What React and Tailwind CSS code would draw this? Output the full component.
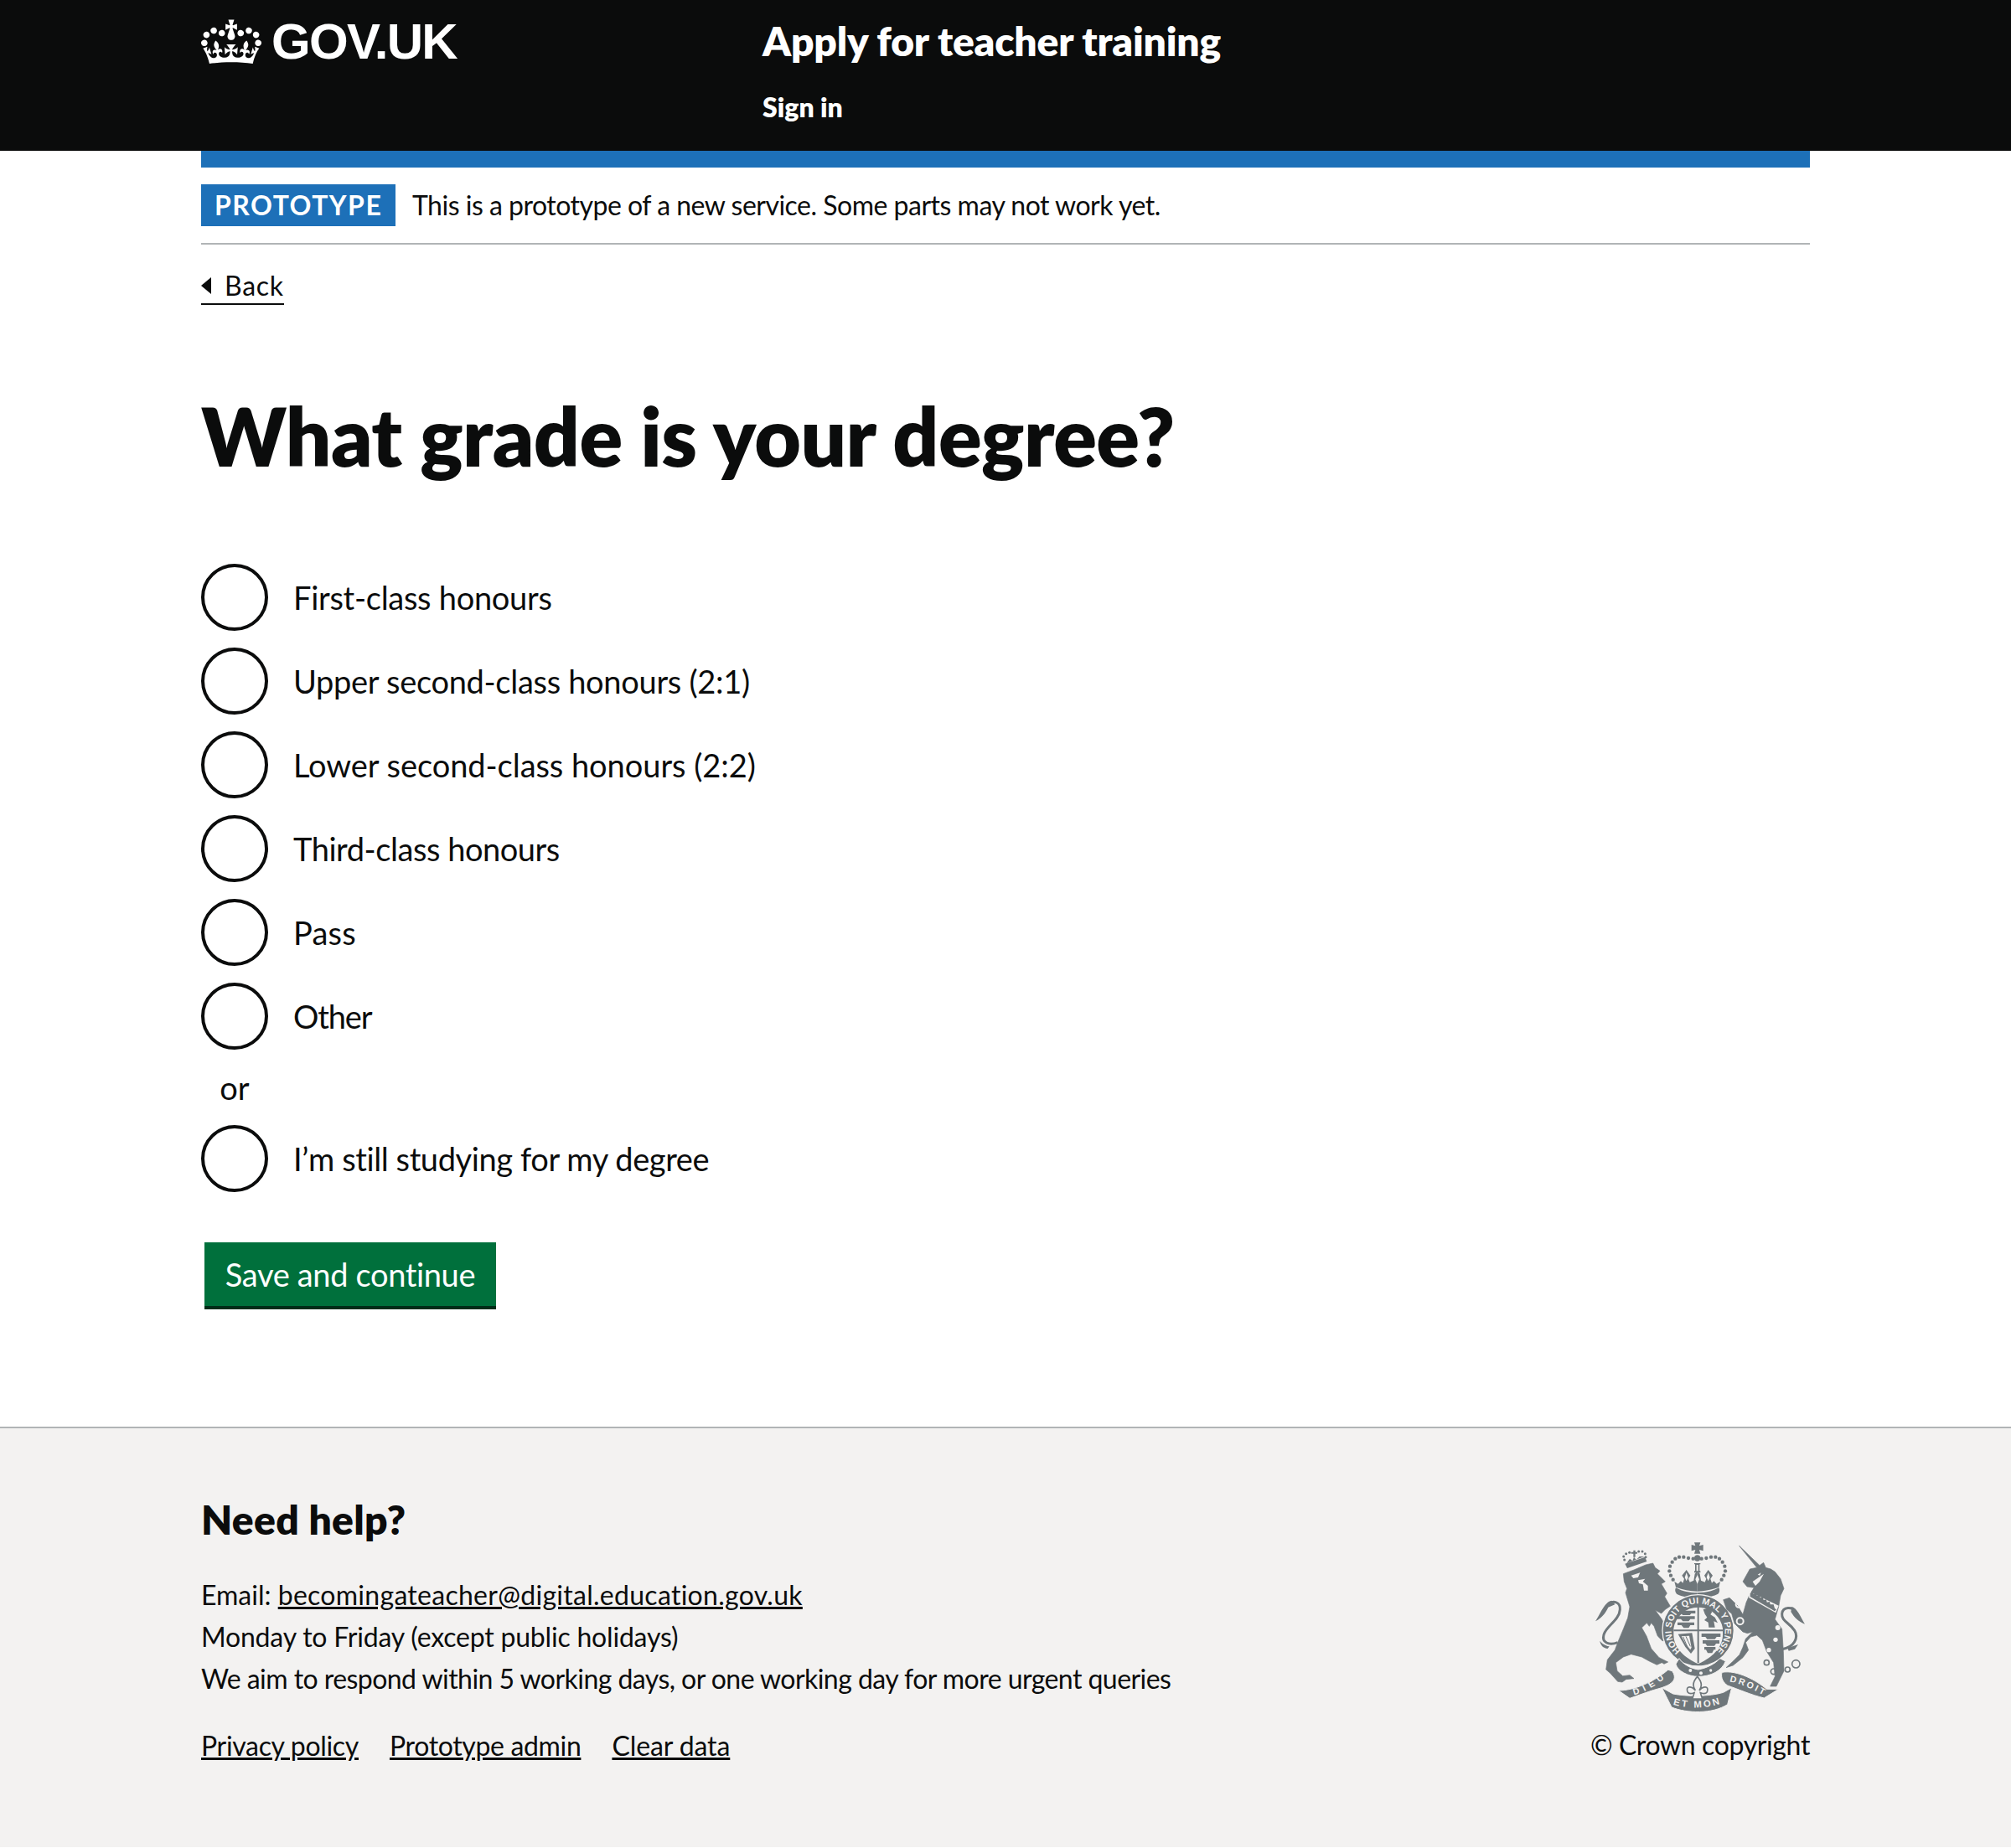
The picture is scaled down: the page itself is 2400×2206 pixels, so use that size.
import React from "react";

const font = { fontFamily: 'Lato, sans-serif' };
const G = "#6f777b";
const B = "#f3f2f1";
const crestFont = "Liberation Sans, sans-serif";

function Crown() {
  return (
    <svg viewBox="0 0 132 97" className="w-[72px] h-[60px] text-white shrink-0" aria-hidden="true">
      <path fill="currentColor" fillRule="evenodd" d="M25 30.2c3.5 1.5 7.7-.2 9.1-3.7 1.5-3.6-.2-7.8-3.9-9.2-3.6-1.4-7.6.3-9.1 3.9-1.4 3.5.3 7.5 3.9 9zM9 39.5c3.6 1.5 7.8-.2 9.2-3.7 1.5-3.6-.2-7.8-3.9-9.1-3.6-1.5-7.6.2-9.1 3.8-1.4 3.5.3 7.5 3.8 9zM4.4 57.2c3.5 1.5 7.7-.2 9.1-3.8 1.5-3.6-.2-7.7-3.9-9.1-3.5-1.5-7.6.3-9.1 3.8-1.4 3.5.3 7.6 3.9 9.1zm38.3-21.4c3.5 1.5 7.7-.2 9.1-3.8 1.5-3.6-.2-7.7-3.9-9.1-3.6-1.5-7.6.3-9.1 3.8-1.3 3.6.4 7.7 3.9 9.1zm64.4-5.6c-3.6 1.5-7.8-.2-9.1-3.7-1.5-3.6.2-7.8 3.8-9.2 3.6-1.4 7.7.3 9.2 3.9 1.3 3.5-.4 7.5-3.9 9zm15.9 9.3c-3.6 1.5-7.7-.2-9.1-3.7-1.5-3.6.2-7.8 3.7-9.1 3.6-1.5 7.7.2 9.2 3.8 1.5 3.5-.3 7.5-3.8 9zm4.7 17.7c-3.6 1.5-7.8-.2-9.2-3.8-1.5-3.6.2-7.7 3.9-9.1 3.6-1.5 7.7.3 9.2 3.8 1.3 3.5-.4 7.6-3.9 9.1zM89.3 35.8c-3.6 1.5-7.8-.2-9.2-3.8-1.4-3.6.2-7.7 3.9-9.1 3.6-1.5 7.7.3 9.2 3.8 1.4 3.6-.3 7.7-3.9 9.1zM69.7 17.7l8.9 4.7V9.3l-8.9 2.8c-.2-.3-.5-.6-.9-.9L72.4 0H59.6l3.5 11.2c-.3.3-.6.5-.9.9l-8.8-2.8v13.1l8.8-4.7c.3.3.6.7.9.9l-5 15.4v.1c-.2.8-.4 1.6-.4 2.4 0 4.1 3.1 7.5 7 8.1h.2c.3 0 .7.1 1 .1.4 0 .7 0 1-.1h.2c4-.6 7.1-4.1 7.1-8.1 0-.8-.1-1.7-.4-2.4V34l-5.1-15.4c.4-.2.7-.6 1-.9zM66 92.8c16.9 0 32.8 1.1 47.1 3.2 4-16.9 8.9-26.7 14-33.5l-9.6-3.4c1 4.9 1.1 7.2 0 10.2-1.5-1.4-3-4.3-4.2-8.7L108.6 76c2.8-2 5-3.2 7.5-3.3-4.4 9.4-10 11.9-13.6 11.2-4.3-.8-6.3-4.6-5.6-7.9 1-4.7 5.7-5.9 8-.5 4.3-8.7-3-11.4-7.6-8.8 7.1-7.2 7.9-13.5 2.1-21.1-8 6.1-8.1 12.3-4.5 20.8-4.7-5.4-12.1-2.5-9.5 6.2 3.4-5.2 7.9-2 7.2 3.1-.6 4.3-6.4 7.8-13.5 7.2-10.3-.9-10.9-8-11.2-13.8 2.5-.5 7.1 1.8 11 7.3L80.2 60c-4.1 4.4-8 5.3-12.3 5.4 1.4-4.4 8-11.6 8-11.6H55.5s6.4 7.2 7.9 11.6c-4.2-.1-8-1-12.3-5.4l1.4 16.4c3.9-5.5 8.5-7.7 10.9-7.3-.3 5.8-.9 12.8-11.1 13.8-7.2.6-12.9-2.9-13.5-7.2-.7-5 3.8-8.3 7.1-3.1 2.7-8.7-4.6-11.6-9.4-6.2 3.7-8.5 3.6-14.7-4.6-20.8-5.8 7.6-5 13.9 2.2 21.1-4.7-2.6-11.9.1-7.7 8.8 2.3-5.5 7.1-4.2 8.1.5.7 3.3-1.3 7.1-5.7 7.9-3.5.7-9-1.8-13.5-11.2 2.5.1 4.7 1.3 7.5 3.3l-4.7-15.4c-1.2 4.4-2.7 7.2-4.3 8.7-1.1-3-.9-5.3 0-10.2l-9.5 3.4c5 6.9 9.9 16.7 14 33.5 14.8-2.1 30.8-3.2 47.7-3.2z" />
    </svg>
  );
}

const crownHalf = (
  <g>
    {[[362,68],[345,66],[328,62],[312,62],[298,68],[287,80],[279,95],[277,112],[282,128],[290,143]].map(([x, y]) => (
      <circle key={x + "-" + y} cx={x} cy={y} r="6.5" fill={G} />
    ))}
    <path fill={G} d="M295,150 L308,158 L318,148 L325,155 L330,140 L322,128 L338,108 L352,128 L345,140 L350,152 L364,146 L368,122 L377,112 V185 C350,185 325,178 300,170 Z" />
    <path fill={G} d="M300,172 C325,186 350,190 377,190 V208 C350,208 322,204 303,194 C297,188 296,178 300,172 Z" />
  </g>
);

function Crest() {
  return (
    <svg viewBox="0 0 765 630" className="w-[255px] h-[210px] mt-[53px] mr-[5px]" aria-hidden="true">
      <defs>
        <path id="garter" d="M318,398 A96 96 0 1 1 442,398" />
        <path id="dieu" d="M150,556 C185,548 225,525 258,498" />
        <path id="etmon" d="M290,590 C335,605 410,606 462,586" />
        <path id="droit" d="M492,508 C530,515 575,535 612,556" />
      </defs>

      {/* lion */}
      <path fill={G} stroke={G} strokeWidth="2" strokeLinejoin="round" d="M112,122 L150,108 L192,90 L218,84 L226,100 L243,112 L234,122 L262,150 L248,158 L268,192 L260,204 L280,238 L262,250 L248,264 L226,252 L250,285 L264,315 L256,345 L270,362 L252,362 L235,345 L222,310 L212,298 L205,310 L196,298 L178,315 L195,345 L212,390 L240,422 L272,438 L258,445 L250,440 L232,448 L205,435 L178,420 L140,410 L112,420 L85,440 L90,470 L110,488 L135,485 L150,497 L122,500 L108,510 L92,508 L65,478 L50,465 L55,430 L82,395 L92,368 L112,320 L128,280 L135,240 L120,190 L125,175 L115,150 Z" />
      <path fill={B} d="M140,128 L172,118 L165,135 L148,138 Z M165,145 L190,140 L182,150 L200,165 L200,182 L186,182 L182,160 L168,156 Z" />
      <path fill="none" stroke={G} strokeWidth="9" d="M92,368 C60,380 34,368 42,340 C50,310 98,288 100,250 C102,225 78,215 58,230" />
      <path fill={G} d="M70,218 C45,222 30,265 12,292 C38,278 48,262 58,242 L82,232 Z M28,362 C36,372 44,378 62,382 L56,390 C40,388 30,378 28,362 Z" />
      <path fill={G} d="M118,86 L190,62 L196,78 L126,102 Z M124,84 L135,68 L145,76 L150,62 L158,72 L170,60 L188,60 Z M140,44 H148 V38 H155 V44 H162 V50 H155 V62 H148 V50 H140 Z" />
      {[[116,72],[113,60],[122,50],[134,46],[167,42],[180,42],[190,50],[192,62]].map(([x, y]) => (
        <circle key={x + "-" + y} cx={x} cy={y} r="4.5" fill={G} />
      ))}

      {/* royal crown */}
      {crownHalf}
      <g transform="matrix(-1 0 0 1 754 0)">{crownHalf}</g>
      <path fill={G} d="M366,10 H388 L384,22 L398,18 V40 L384,36 L388,50 H366 L370,36 L356,40 V18 L370,22 Z" />
      <circle cx="377" cy="66" r="11" fill={G} />
      <path fill={G} d="M366,84 H388 V88 H385 V112 H388 V118 H366 V112 H369 V88 H366 Z" />
      <path fill={B} d="M374,90 H380 V112 H374 Z M338,118 L344,135 L338,148 L332,135 Z M416,118 L422,135 L416,148 L410,135 Z M377,126 L384,142 L377,158 L370,142 Z" />

      {/* garter */}
      <circle cx="380" cy="325" r="128" fill={G} stroke={B} strokeWidth="4" />
      <text fontFamily={crestFont} fontWeight="700" fontSize="32" fill={B}>
        <textPath href="#garter" textLength="466" lengthAdjust="spacing">HONI SOIT QUI MAL Y PENSE</textPath>
      </text>

      {/* shield */}
      <path fill={B} d="M292,318 A89 89 0 0 1 468,318 V340 C468,390 425,425 380,445 C335,425 292,390 292,340 Z" />
      <g transform="translate(0 -8)">
        <path fill={G} d="M377,244 H383 V450 H377 Z M292,330 H468 V336 H292 Z" />
        <path fill={G} d="M312,262 H370 V272 H355 L350,278 H325 L318,272 H312 Z M304,282 H368 V292 H352 L346,300 H325 L318,292 H304 Z M306,304 H366 V314 H352 L346,324 H328 L320,314 H306 Z" />
        <path fill={G} d="M398,258 L418,252 L430,266 L424,276 L440,286 L450,306 L436,300 L440,322 L418,322 L416,304 L402,296 L412,286 L404,274 Z" />
        <path fill={G} d="M308,346 L358,342 L368,398 L354,416 L334,392 Z" />
        <path fill={B} d="M320,354 L348,352 L356,394 L352,402 L336,382 Z" />
        <path stroke={G} strokeWidth="3" d="M326,356 L344,398 M336,354 L352,390" />
        <path fill={G} d="M392,344 H460 V356 H446 L440,364 H412 L406,356 H392 Z M396,368 H456 V380 H444 L438,388 H412 L406,380 H396 Z M402,392 H442 V402 H436 L430,414 H414 L408,402 H402 Z" />
      </g>

      {/* strap */}
      <path fill={G} stroke={B} strokeWidth="3" d="M312,425 C325,445 350,460 380,465 C410,460 440,445 458,425 L478,435 C465,470 425,490 380,490 C345,490 305,470 300,445 Z" />
      <circle cx="352" cy="468" r="6" fill={B} /><circle cx="390" cy="478" r="6" fill={B} /><circle cx="425" cy="468" r="5" fill={B} />

      {/* motto */}
      <path fill={G} stroke={B} strokeWidth="3" d="M95,540 C150,540 220,510 272,466 L287,470 C302,492 296,508 270,522 L250,530 C210,540 170,556 135,568 Z" />
      <path fill={G} stroke={B} strokeWidth="3" d="M250,530 L290,552 C340,562 420,562 470,547 L500,530 L485,590 C430,625 340,622 285,600 Z" />
      <path fill={G} stroke={B} strokeWidth="3" d="M465,475 C520,465 590,505 625,535 L668,535 L616,567 C570,556 520,534 485,522 C470,512 460,495 465,475 Z" />
      <text fontFamily={crestFont} fontWeight="700" fontSize="32" fill={B}><textPath href="#dieu" textLength="125">DIEU</textPath></text>
      <text fontFamily={crestFont} fontWeight="700" fontSize="34" fill={B}><textPath href="#etmon" textLength="170">ET MON</textPath></text>
      <text fontFamily={crestFont} fontWeight="700" fontSize="32" fill={B}><textPath href="#droit" textLength="130">DROIT</textPath></text>
      <path fill={B} stroke={G} strokeWidth="5" d="M377,490 C395,510 395,525 384,540 C395,525 420,520 412,545 C405,555 395,550 388,548 L395,570 H359 L366,548 C359,550 349,555 342,545 C334,520 359,525 370,540 C359,525 359,510 377,490 Z" />

      {/* unicorn */}
      <path fill={G} stroke={G} strokeWidth="2" strokeLinejoin="round" d="M527,22 L600,92 L614,82 L622,100 L640,105 L655,115 L675,140 L687,175 L675,200 L668,240 L655,285 L680,320 L685,400 L687,470 L660,525 L638,525 L655,490 L650,440 L625,400 L610,360 L590,342 L568,348 L550,368 L560,395 L540,422 L505,450 L480,458 L505,435 L528,412 L540,385 L550,355 L575,330 L556,335 L540,330 L510,300 L500,265 L482,250 L470,215 L492,208 L520,235 L540,268 L552,225 L565,195 L580,172 L555,168 L540,150 L565,105 L590,100 Z" />
      <path fill={B} d="M560,184 L668,236 L658,262 L562,208 Z" />
      <path fill={G} d="M566,192 L574,186 L578,194 L588,190 L590,200 L600,198 L602,208 L612,206 L614,216 L624,214 L626,224 L636,222 L638,232 L650,232 L654,246 L660,250 L654,256 L566,204 Z" />
      <path fill={B} d="M575,150 L615,122 L600,150 L585,165 Z M593,125 L605,118 L601,128 Z" />
      <circle cx="525" cy="232" r="10" fill="none" stroke={B} strokeWidth="6" />
      <circle cx="530" cy="292" r="12" fill="none" stroke={B} strokeWidth="6" />
      <circle cx="665" cy="315" r="9" fill={B} /><circle cx="657" cy="358" r="8" fill={B} /><circle cx="633" cy="395" r="8" fill={B} />
      <path fill="none" stroke={G} strokeWidth="9" d="M680,392 C725,385 740,350 725,325 C705,295 678,292 680,265 C683,238 718,240 730,258" />
      <path fill={G} d="M715,240 C735,245 745,275 762,302 C738,292 725,280 712,258 Z M700,388 L738,375 L726,392 L704,398 Z" />
      <g fill="none" stroke={G} strokeWidth="5">
        <circle cx="625" cy="440" r="9" /><circle cx="650" cy="472" r="10" /><circle cx="700" cy="465" r="9" /><circle cx="730" cy="445" r="14" />
      </g>
    </svg>
  );
}

function Radio({ label, track }) {
  return (
    <label className="flex items-center h-20 mb-5">
      <span className="w-20 h-20 rounded-full border-[4px] border-[#0b0c0c] shrink-0 bg-white" />
      <span className={"pl-[30px] text-[38px] leading-[50px] " + track}>{label}</span>
    </label>
  );
}

export default function App() {
  return (
    <div className="bg-white text-[#0b0c0c]" style={font}>
      <header className="bg-[#0b0c0c] h-[180px] text-white">
        <div className="w-[1920px] mx-auto flex">
          <a className="w-[670px] flex items-start pt-[20px] gap-[12px]">
            <Crown />
            <span className="text-[60px] leading-[60px] font-bold tracking-[-1.7px]" style={{ fontFamily: '"Liberation Sans", sans-serif' }}>GOV.UK</span>
          </a>
          <div className="pt-[19px]">
            <div className="text-[48px] leading-[60px] font-extrabold tracking-[-0.2px]">Apply for teacher training</div>
            <div className="mt-[29px] text-[32px] leading-[40px] font-extrabold">Sign in</div>
          </div>
        </div>
      </header>
      <main className="w-[1920px] mx-auto">
        <div className="h-5 bg-[#1d70b8]" />
        <div className="pt-5 pb-5 border-b-2 border-[#b1b4b6] flex items-center">
          <strong className="bg-[#1d70b8] text-white text-[32px] leading-[50px] h-[50px] px-4 font-bold tracking-[1.5px] w-[232px] whitespace-nowrap">PROTOTYPE</strong>
          <span className="ml-5 text-[32px] leading-[50px] tracking-[-0.5px]">This is a prototype of a new service. Some parts may not work yet.</span>
        </div>
        <a className="inline-flex items-start mt-[30px] border-b-2 border-[#0b0c0c] text-[32px] leading-[38px] h-[42px] tracking-[0.7px]">
          <span className="w-0 h-0 border-y-[10px] border-y-transparent border-r-[12px] border-r-[#0b0c0c] mr-[16px] mt-[9px]" />
          Back
        </a>
        <h1 className="mt-[106px] text-[96px] leading-[100px] font-extrabold tracking-[-0.55px]">What grade is your degree?</h1>
        <div className="mt-[103px]">
          <Radio label="First-class honours" track="tracking-[-0.28px]" />
          <Radio label="Upper second-class honours (2:1)" track="tracking-[-0.3px]" />
          <Radio label="Lower second-class honours (2:2)" track="tracking-[-0.05px]" />
          <Radio label="Third-class honours" track="tracking-[-0.45px]" />
          <Radio label="Pass" track="tracking-[0.2px]" />
          <Radio label="Other" track="tracking-[-1.1px]" />
          <div className="w-20 text-center text-[38px] leading-[50px] mb-5">or</div>
          <Radio label="I’m still studying for my degree" track="tracking-[-0.4px]" />
        </div>
        <button className="mt-[40px] ml-1 bg-[#00703c] text-white text-[38px] leading-[50px] h-[80px] w-[348px] border-b-4 border-[#002d18] tracking-[-0.35px]">Save and continue</button>
      </main>
      <footer className="mt-[140px] bg-[#f3f2f1] border-t-2 border-[#b1b4b6] h-[502px]">
        <div className="w-[1920px] mx-auto flex justify-between pt-[80px]">
          <div>
            <h2 className="text-[48px] leading-[58px] font-extrabold tracking-[0.3px]">Need help?</h2>
            <p className="mt-[36px] text-[32px] leading-[50px]">Email: <a className="underline tracking-[0.28px]">becomingateacher@digital.education.gov.uk</a></p>
            <p className="text-[32px] leading-[50px] tracking-[-0.2px]">Monday to Friday (except public holidays)</p>
            <p className="text-[32px] leading-[50px] tracking-[-0.55px]">We aim to respond within 5 working days, or one working day for more urgent queries</p>
            <div className="mt-[30px] flex gap-[37px] text-[32px] leading-[50px]">
              <a className="underline tracking-[-0.33px]">Privacy policy</a>
              <a className="underline tracking-[-0.35px]">Prototype admin</a>
              <a className="underline tracking-[-0.1px]">Clear data</a>
            </div>
          </div>
          <div className="flex flex-col items-end">
            <Crest />
            <div className="mt-[10px] text-[32px] leading-[50px] tracking-[-0.37px]">© Crown copyright</div>
          </div>
        </div>
      </footer>
    </div>
  );
}
